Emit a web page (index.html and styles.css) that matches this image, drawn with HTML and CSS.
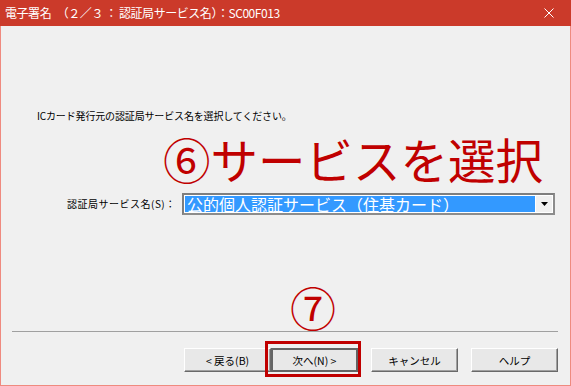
FILE: index.html
```html
<!DOCTYPE html>
<html lang="ja">
<head>
<meta charset="utf-8">
<link rel="stylesheet" href="styles.css">
</head>
<body>
<div class="window">
  <div class="titlebar">
    <span class="title">電子署名　（２／３ ： 認証局サービス名）：SC00F013</span>
    <span class="close">
      <svg width="10" height="10" viewBox="0 0 10 10"><path d="M0.5 0.5 L9.5 9.5 M9.5 0.5 L0.5 9.5" stroke="#fff" stroke-width="1" fill="none"/></svg>
    </span>
  </div>
  <div class="content">
    <p class="instruction">ICカード発行元の認証局サービス名を選択してください。</p>
    <div class="note note-6">⑥サービスを選択</div>
    <div class="combo-row">
      <span class="combo-label">認証局サービス名(S)：</span>
      <div class="combo">
        <span class="combo-value">公的個人認証サービス（住基カード）</span>
        <span class="combo-btn"><svg width="7" height="4" viewBox="0 0 7 4"><path d="M0 0 H7 L3.5 4 Z" fill="#000"/></svg></span>
      </div>
    </div>
    <div class="note note-7">⑦</div>
    <div class="separator"></div>
    <div class="buttons">
      <button class="btn">&lt; 戻る(B)</button>
      <button class="btn btn-default">次へ(N) &gt;</button>
      <button class="btn btn-gap">キャンセル</button>
      <button class="btn btn-gap">ヘルプ</button>
    </div>
  </div>
</div>
</body>
</html>
```
FILE: styles.css
```css
html, body {
  margin: 0;
  padding: 0;
  background: #f0f0f0;
}
.window {
  width: 571px;
  height: 386px;
  box-sizing: border-box;
  border: 1px solid #ef8a7f;
  border-top: none;
  background: #f0f0f0;
  font-family: "Noto Sans CJK JP", "Noto Sans", sans-serif;
  display: flex;
  flex-direction: column;
}
.titlebar {
  height: 26px;
  margin: 0 -1px;
  background: #cb3a2a;
  color: #fff;
  display: flex;
  align-items: center;
  justify-content: space-between;
  padding: 0 17px 0 5px;
}
.title {
  font-size: 12px;
  line-height: 26px;
  letter-spacing: -0.45px;
}
.close {
  display: flex;
  width: 10px;
  height: 10px;
}
.content {
  flex: 1;
  padding: 0 12px 0 11px;
  display: flex;
  flex-direction: column;
}
.instruction {
  margin: 83px 0 0 25px;
  font-size: 10px;
  line-height: 14px;
  color: #000;
  letter-spacing: -0.15px;
}
.note {
  color: #c00000;
  line-height: 46px;
  height: 46px;
  white-space: nowrap;
}
.note-6 {
  font-size: 47.5px;
  margin: 13px 0 0 151px;
}
.combo-row {
  display: flex;
  align-items: center;
  margin-top: 11px;
  height: 22px;
}
.combo-label {
  width: 115px;
  margin-left: 55px;
  font-size: 10px;
  line-height: 14px;
  letter-spacing: 0.5px;
  color: #000;
}
.combo {
  width: 373px;
  height: 22px;
  box-sizing: border-box;
  border: 2px solid #7e7e7e;
  border-right-color: #8c8c8c;
  border-bottom-color: #8c8c8c;
  background: #fff;
  padding: 1px;
  display: flex;
}
.combo-value {
  flex: 1;
  background: #3399ff;
  color: #fff;
  font-size: 16px;
  line-height: 16px;
  padding-left: 2px;
  white-space: nowrap;
}
.combo-btn {
  width: 16px;
  margin-left: 1px;
  background: #f0f0f0;
  display: flex;
  align-items: center;
  justify-content: center;
}
.note-7 {
  font-size: 46px;
  margin: 68px 0 0 278px;
}
.separator {
  margin-top: 2px;
  height: 1px;
  background: #a0a0a0;
}
.buttons {
  margin-top: 16px;
  display: flex;
  justify-content: flex-end;
}
.btn {
  width: 87px;
  height: 24px;
  box-sizing: border-box;
  margin: 0;
  padding: 0;
  font-family: "Noto Sans CJK JP", "Noto Sans", sans-serif;
  font-size: 10.5px;
  color: #000;
  background: #e8e8e8;
  border: 1px solid;
  border-color: #ffffff #696969 #696969 #ffffff;
  box-shadow: inset -1px -1px 0 #a0a0a0;
}
.btn-default {
  position: relative;
  border: 2px solid #646464;
  box-shadow: none;
}
.btn-default::after {
  content: "";
  position: absolute;
  top: -9px;
  left: -8px;
  right: -5px;
  bottom: -7px;
  border: 3px solid #c00000;
}
.btn-gap {
  margin-left: 13px;
}
```
